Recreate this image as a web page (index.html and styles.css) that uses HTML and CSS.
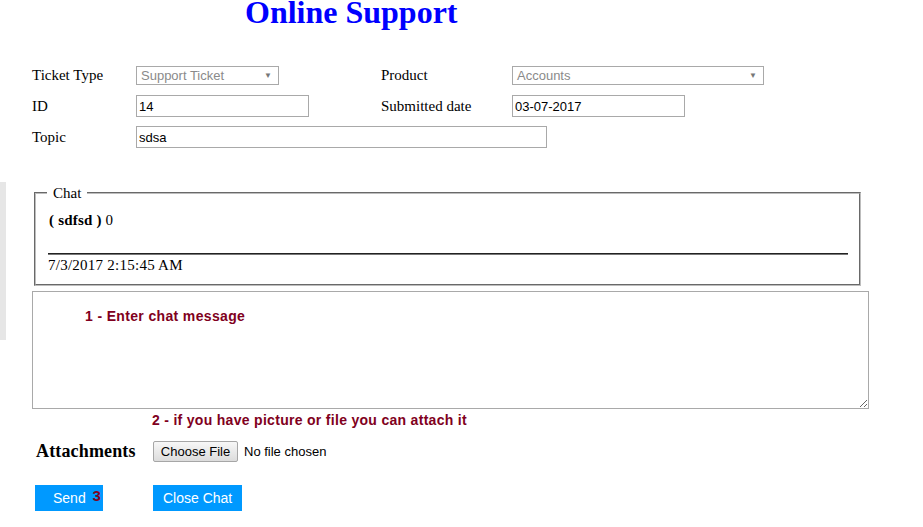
FILE: index.html
```html
<!DOCTYPE html>
<html>
<head>
<meta charset="utf-8">
<title>Online Support</title>
<link rel="stylesheet" href="styles.css">
</head>
<body>
<div class="page">
  <h1 class="title">Online Support</h1>

  <div class="form-grid">
    <div class="lbl">Ticket Type</div>
    <div class="fld"><div class="select sel-type"><span>Support Ticket</span><span class="arrow">&#9660;</span></div></div>
    <div class="lbl">Product</div>
    <div class="fld"><div class="select sel-product"><span>Accounts</span><span class="arrow">&#9660;</span></div></div>

    <div class="lbl">ID</div>
    <div class="fld"><input class="txt txt-short" type="text" value="14"></div>
    <div class="lbl">Submitted date</div>
    <div class="fld"><input class="txt txt-short" type="text" value="03-07-2017"></div>

    <div class="lbl">Topic</div>
    <div class="fld span3"><input class="txt txt-long" type="text" value="sdsa"></div>
  </div>

  <div class="chat-section">
    <div class="strip"></div>
    <div class="chat-col">
      <fieldset class="chat-box">
        <legend class="chat-legend">Chat</legend>
        <div class="msg"><b>( sdfsd )</b> 0</div>
        <hr class="msg-rule">
        <div class="msg-date">7/3/2017 2:15:45 AM</div>
      </fieldset>
      <textarea class="chat-input" placeholder="1 - Enter chat message"></textarea>
    </div>
  </div>

  <div class="hint">2 - if you have picture or file you can attach it</div>

  <div class="attach-row">
    <div class="attach-lbl">Attachments</div>
    <button class="file-btn" type="button">Choose File</button>
    <span class="file-name">No file chosen</span>
  </div>

  <div class="btn-row">
    <button class="btn btn-send" type="button">Send <span class="step">3</span></button>
    <button class="btn btn-close" type="button">Close Chat</button>
  </div>
</div>
</body>
</html>
```
FILE: styles.css
```css
html, body {
  margin: 0;
  padding: 0;
  background: #ffffff;
}

body {
  font-family: "Liberation Serif", "Times New Roman", serif;
  font-size: 15px;
  color: #000;
}

.page {
  width: 923px;
  height: 527px;
  overflow: hidden;
}

.title {
  margin: 0 0 0 245px;
  font-family: "Liberation Serif", "Times New Roman", serif;
  font-size: 32px;
  font-weight: bold;
  line-height: 24px;
  color: #0000ff;
}

.form-grid {
  margin: 40px 0 0 32px;
  display: grid;
  grid-template-columns: 104px 245px 131px auto;
  grid-auto-rows: 22px;
  row-gap: 9px;
  align-items: center;
}

.lbl {
  font-size: 15px;
  line-height: 18px;
}

.fld {
  display: flex;
  align-items: center;
}

.span3 {
  grid-column: 2 / span 3;
}

.select {
  box-sizing: border-box;
  height: 19px;
  border: 1px solid #a9a9a9;
  display: flex;
  align-items: center;
  justify-content: space-between;
  padding: 0 6px 0 4px;
  font-family: "Liberation Sans", Arial, sans-serif;
  font-size: 13px;
  color: #8a8a8a;
  background: #fff;
}

.sel-type {
  width: 143px;
}

.sel-product {
  width: 252px;
}

.arrow {
  font-size: 8px;
  color: #777;
}

.txt {
  box-sizing: border-box;
  height: 22px;
  margin: 0;
  border: 1px solid #a9a9a9;
  padding: 0 2px;
  font-family: "Liberation Sans", Arial, sans-serif;
  font-size: 13px;
  color: #000;
  background: #fff;
  outline: none;
}

.txt-short {
  width: 173px;
}

.txt-long {
  width: 411px;
}

.chat-section {
  margin-top: 34px;
  display: flex;
  align-items: flex-start;
}

.strip {
  width: 6px;
  height: 158px;
  background: #e6e6e6;
  flex: none;
}

.chat-col {
  margin-left: 26px;
  padding-top: 3px;
  display: flex;
  flex-direction: column;
  align-items: flex-start;
}

.chat-box {
  box-sizing: border-box;
  width: 827px;
  margin: 0 0 0 2px;
  padding: 10px 11px 10px 13px;
  border: 2px groove #bdbdbd;
  min-width: 0;
}

.chat-legend {
  padding: 0 6px;
  margin-left: -2px;
  font-size: 15px;
  line-height: 16px;
}

.msg {
  font-size: 15px;
  line-height: 18px;
  letter-spacing: 0.2px;
}

.msg-rule {
  margin: 24px 0 0 -1px;
  height: 0;
  border: 0;
  border-top: 1px solid #222;
  border-bottom: 1px solid #777;
}

.msg-date {
  margin-left: -1px;
  margin-top: 1px;
  font-size: 15px;
  line-height: 18px;
  letter-spacing: 0.25px;
}

.chat-input {
  display: block;
  box-sizing: border-box;
  width: 837px;
  height: 118px;
  margin: 5px 0 0 0;
  border: 1px solid #a9a9a9;
  padding: 16px 8px 0 52px;
  font-family: "Liberation Sans", Arial, sans-serif;
  font-size: 14px;
  line-height: 16px;
  letter-spacing: 0.35px;
  resize: both;
  outline: none;
}

.chat-input::placeholder {
  color: #800020;
  font-weight: bold;
  opacity: 1;
}

.hint {
  margin: 3px 0 0 152px;
  font-family: "Liberation Sans", Arial, sans-serif;
  font-size: 14px;
  font-weight: bold;
  line-height: 16px;
  letter-spacing: 0.3px;
  color: #800020;
}

.attach-row {
  margin: 12px 0 0 36px;
  height: 22px;
  display: flex;
  align-items: center;
}

.attach-lbl {
  width: 117px;
  font-size: 18px;
  font-weight: bold;
  line-height: 20px;
  letter-spacing: 0.15px;
}

.file-btn {
  box-sizing: border-box;
  width: 85px;
  height: 21px;
  margin: 0;
  padding: 0;
  border: 1px solid #a6a6a6;
  border-radius: 2px;
  background: linear-gradient(#f7f7f7, #dcdcdc);
  font-family: "Liberation Sans", Arial, sans-serif;
  font-size: 13px;
  color: #000;
}

.file-name {
  margin-left: 6px;
  font-family: "Liberation Sans", Arial, sans-serif;
  font-size: 13px;
}

.btn-row {
  margin: 23px 0 0 35px;
  display: flex;
  gap: 50px;
}

.btn {
  box-sizing: border-box;
  height: 26px;
  margin: 0;
  border: 0;
  background: #0099ff;
  color: #fff;
  font-family: "Liberation Sans", Arial, sans-serif;
  font-size: 14px;
  line-height: 16px;
  text-align: left;
}

.btn-send {
  width: 68px;
  padding: 0 0 0 18px;
}

.btn-close {
  width: 89px;
  padding: 0 0 0 10px;
}

.step {
  margin-left: 3px;
  color: #800020;
  font-weight: bold;
  font-size: 15px;
  position: relative;
  top: -2px;
}
```
